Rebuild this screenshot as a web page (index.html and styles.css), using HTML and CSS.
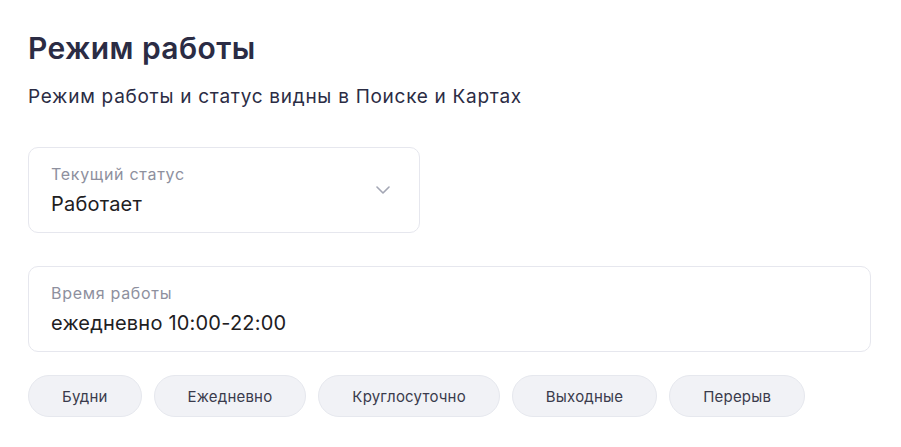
FILE: index.html
```html
<!DOCTYPE html>
<html lang="ru">
<head>
<meta charset="utf-8">
<title>Режим работы</title>
<link rel="stylesheet" href="styles.css">
</head>
<body>
<main class="page">
  <h1 class="title">Режим работы</h1>
  <p class="subtitle">Режим работы и статус видны в Поиске и Картах</p>
  <div class="field field-select">
    <div class="field-body">
      <div class="field-label">Текущий статус</div>
      <div class="field-value">Работает</div>
    </div>
    <svg class="chevron" width="14" height="8" viewBox="0 0 14 8"><path d="M1 1l6 6 6-6" fill="none" stroke="#a3a6b4" stroke-width="1.6" stroke-linecap="round" stroke-linejoin="round"/></svg>
  </div>
  <div class="field field-wide">
    <div class="field-body">
      <div class="field-label">Время работы</div>
      <div class="field-value">ежедневно 10:00-22:00</div>
    </div>
  </div>
  <div class="chips">
    <button class="chip">Будни</button>
    <button class="chip">Ежедневно</button>
    <button class="chip">Круглосуточно</button>
    <button class="chip">Выходные</button>
    <button class="chip">Перерыв</button>
  </div>
</main>
</body>
</html>
```
FILE: styles.css
```css
html, body {
  margin: 0;
  background: #ffffff;
}
body {
  font-family: "Inter", "Noto Sans", sans-serif;
  color: #21201f;
}
.page {
  padding: 30px 28px 0 28px;
  display: flex;
  flex-direction: column;
  align-items: flex-start;
}
.title {
  margin: 0;
  font-size: 30px;
  line-height: 36px;
  font-weight: 600;
  letter-spacing: 0.4px;
  color: #2b2c44;
}
.subtitle {
  margin: 19px 0 0 0;
  font-size: 19px;
  line-height: 24px;
  letter-spacing: 0.72px;
  color: #2b2c44;
}
.field {
  box-sizing: border-box;
  border: 1px solid #e6e7ee;
  border-radius: 10px;
  display: flex;
  align-items: center;
  padding: 0 29px 0 22px;
  height: 86px;
}
.field-select {
  margin-top: 38px;
  width: 392px;
}
.field-wide {
  margin-top: 33px;
  width: 843px;
}
.field-body {
  flex: 1;
  display: flex;
  flex-direction: column;
}
.field-label {
  font-size: 16px;
  line-height: 20px;
  letter-spacing: 0.7px;
  color: #8e909e;
}
.field-value {
  margin-top: 8px;
  font-size: 20px;
  line-height: 24px;
  letter-spacing: 0.2px;
  color: #21201f;
}
.chevron {
  display: block;
}
.chips {
  margin-top: 23px;
  display: flex;
  gap: 12px;
}
.chip {
  font-family: inherit;
  height: 42px;
  padding: 0 33px;
  border-radius: 21px;
  border: 1px solid #e6e8ee;
  background: #f1f2f6;
  color: #3a3b4c;
  font-size: 15px;
  letter-spacing: 0.2px;
}
```
